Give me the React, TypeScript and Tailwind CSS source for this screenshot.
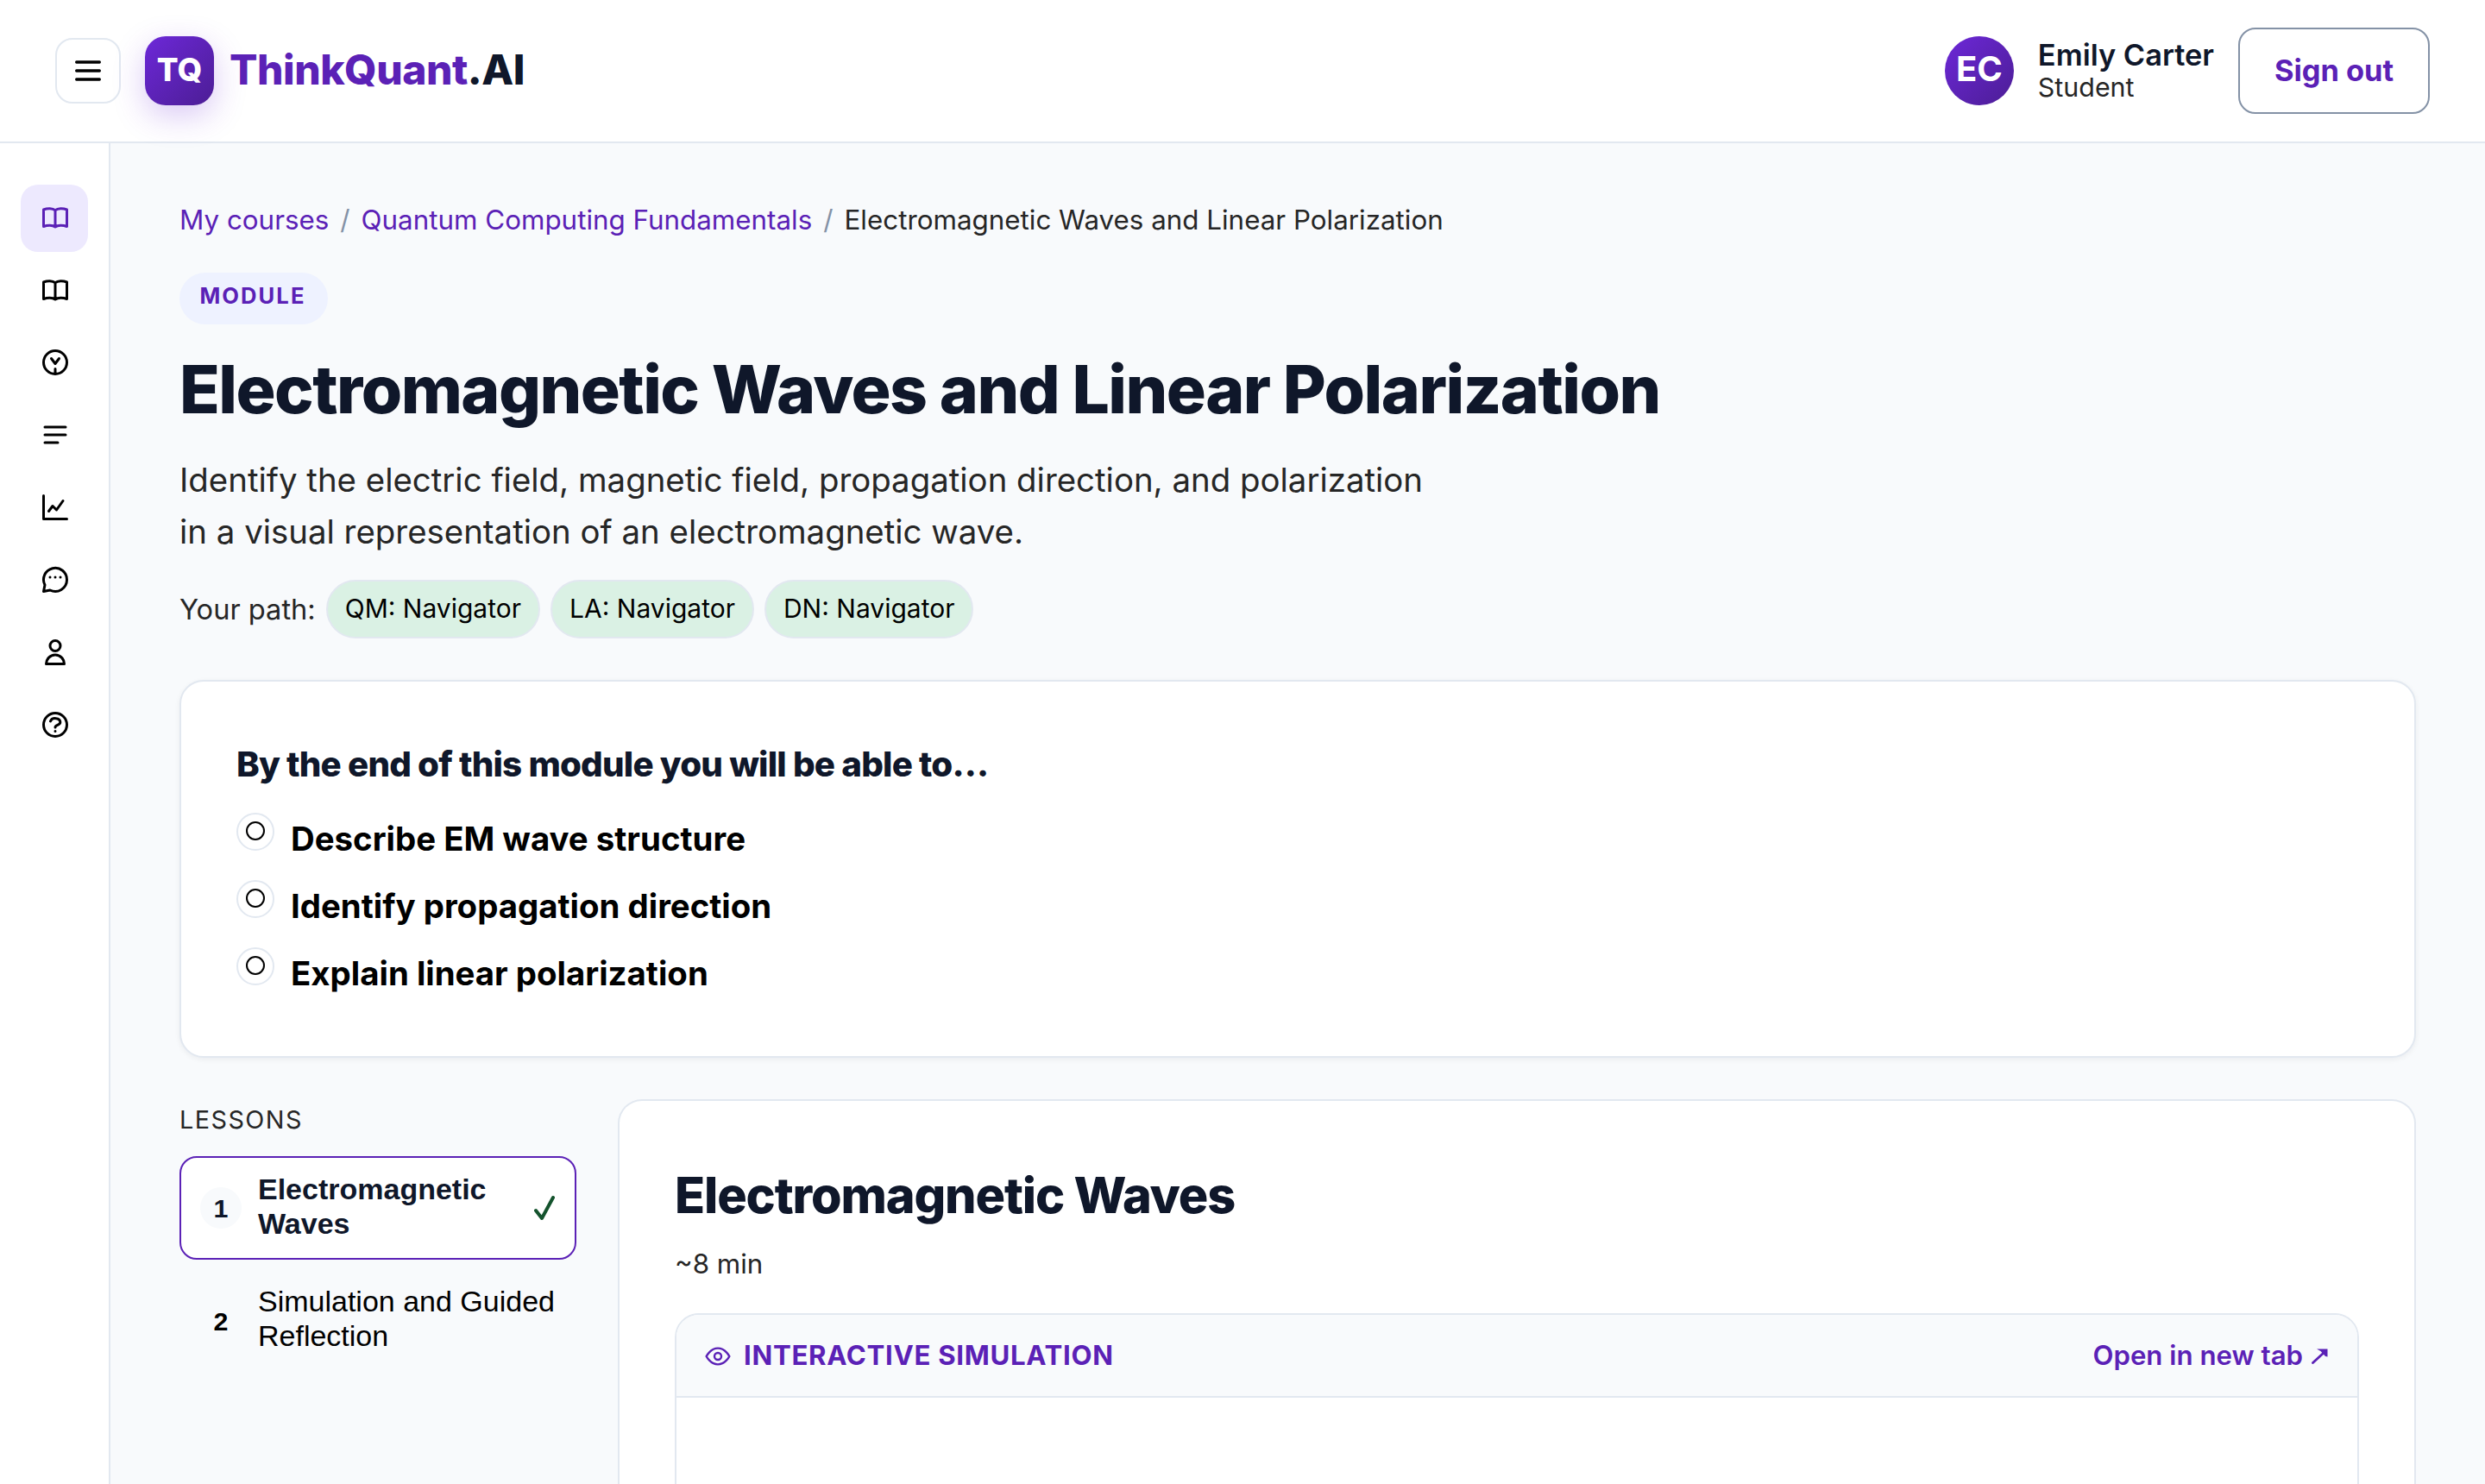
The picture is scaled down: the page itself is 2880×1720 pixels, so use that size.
import React from "react";

const book = (
  <path d="M12 6.5C10 4.8 6 4.8 3 6v13c3-1.2 7-1.2 9 .3 2-1.5 6-1.5 9-.3V6c-3-1.2-7-1.2-9 .5zM12 6.5v12.8" />
);

const navIcons = [
  book,
  book,
  <path d="M21 12a9 9 0 1 1-18 0 9 9 0 0 1 18 0zM9 9l3 4 3-4M12 17v4" />,
  <path d="M4 6h16M4 12h16M4 18h10" />,
  <path d="M3 3v18h18M7 15l3-4 3 3 5-7" />,
  <path d="M21 12a9 9 0 0 1-13 8l-5 1 1-5a9 9 0 1 1 17-4zM8 10h.01M12 10h.01M16 10h.01" />,
  <path d="M16 7a4 4 0 1 1-8 0 4 4 0 0 1 8 0zM5 21a7 7 0 0 1 14 0z" />,
  <path d="M21 12a9 9 0 1 1-18 0 9 9 0 0 1 18 0zM8.3 9.3C9.5 6 15.8 6.5 15.9 10c0 2.5-3.9 2-3.9 4M12 17h.01" />,
];

const paths = ["QM: Navigator", "LA: Navigator", "DN: Navigator"];

const outcomes = [
  "Describe EM wave structure",
  "Identify propagation direction",
  "Explain linear polarization",
];

function Icon({ className, children }: { className: string; children: React.ReactNode }) {
  return (
    <svg
      viewBox="0 0 24 24"
      fill="none"
      stroke="currentColor"
      strokeWidth="2"
      strokeLinecap="round"
      strokeLinejoin="round"
      className={className}
    >
      {children}
    </svg>
  );
}

function Header() {
  return (
    <header className="h-[166px] shrink-0 flex items-center justify-between px-16 bg-white border-b-2 border-[#e2e8f0]">
      <div className="flex items-center">
        <button aria-label="Menu" className="size-[76px] flex items-center justify-center rounded-[20px] border-2 border-[#e2e8f0] text-black">
          <Icon className="size-10"><path d="M4 6h16M4 12h16M4 18h16" /></Icon>
        </button>
        <div className="ml-7 size-20 pb-0.5 flex items-center justify-center rounded-3xl bg-linear-135 from-[#6d28d9] to-[#4c1d95] text-white text-[36.8px] font-extrabold shadow-[0_12px_36px_rgba(109,40,217,0.25)]">
          TQ
        </div>
        <span className="ml-[18px] pb-0.5 text-[48px] leading-none font-extrabold tracking-[-0.01em] text-[#5b21b6]">
          ThinkQuant<span className="text-[#0f172a]">.AI</span>
        </span>
      </div>
      <div className="flex items-center">
        <div className="size-20 pb-1 flex items-center justify-center rounded-full bg-linear-135 from-[#6d28d9] to-[#4c1d95] text-white text-[40px] font-bold">
          EC
        </div>
        <div className="ml-7 pb-px">
          <p className="text-[34.4px] leading-[39px] font-semibold text-[#0f172a]">Emily Carter</p>
          <p className="text-[30.4px] leading-[36px] text-[#262626]">Student</p>
        </div>
        <button className="ml-7 w-[222px] h-[100px] pb-px rounded-[20px] border-2 border-[#8492a6] text-[34.4px] font-bold text-[#5b21b6]">
          Sign out
        </button>
      </div>
    </header>
  );
}

function Sidebar() {
  return (
    <nav className="w-32 shrink-0 flex flex-col items-center gap-1.5 pt-12 bg-white border-r-2 border-[#e2e8f0]">
      {navIcons.map((icon, i) => (
        <a
          key={i}
          className={
            i === 0
              ? "size-[78px] flex items-center justify-center pl-0.5 pb-0.5 rounded-[20px] bg-[#ede9fe] text-[#5b21b6]"
              : "size-[78px] flex items-center justify-center pl-0.5 pb-0.5 text-black"
          }
        >
          <Icon className="size-9">{icon}</Icon>
        </a>
      ))}
    </nav>
  );
}

function ModuleIntro() {
  return (
    <section>
      <div className="pt-[69px] flex gap-[13px] text-[31.35px] leading-[40px] text-[#5b21b6]">
        <a>My courses</a>
        <span className="text-[#8492a6]">/</span>
        <a>Quantum Computing Fundamentals</a>
        <span className="text-[#8492a6]">/</span>
        <span className="text-[#262626]">Electromagnetic Waves and Linear Polarization</span>
      </div>
      <div className="mt-[41px] w-[172px] h-[60px] pl-[23.4px] pb-1.5 flex items-center rounded-full bg-[#eef2ff] text-[25.6px] font-bold tracking-[0.08em] text-[#5b21b6]">
        MODULE
      </div>
      <h1 className="mt-[30px] text-[76.8px] leading-[92px] font-extrabold tracking-[-0.02em] text-[#0f172a]">
        Electromagnetic Waves and Linear Polarization
      </h1>
      <p className="mt-[28px] w-[1500px] text-[38.4px] leading-[60px] text-[#262626]">
        Identify the electric field, magnetic field, propagation direction, and polarization
        <br />
        in a visual representation of an electromagnetic wave.
      </p>
      <div className="mt-[26px] flex items-center gap-3">
        <span className="text-[32.6px] text-[#262626]">Your path:</span>
        {paths.map((path) => (
          <span key={path} className="h-[68px] px-5 pb-0.5 flex items-center rounded-full border-2 border-[#e2e8f0] bg-[#daf1e4] text-[30px] text-black">
            {path}
          </span>
        ))}
      </div>
    </section>
  );
}

function Outcomes() {
  return (
    <section className="mt-12 h-[438px] px-16 pt-[70px] rounded-[28px] border-2 border-[#e2e8f0] bg-white shadow-[0_2px_6px_rgba(15,23,42,0.06)]">
      <h2 className="text-[40.3px] leading-[52px] font-extrabold tracking-[-0.02em] text-[#0f172a]">
        By the end of this module you will be able to…
      </h2>
      <ul className="mt-[26px] flex flex-col gap-[18px]">
        {outcomes.map((outcome) => (
          <li key={outcome} className="h-[60px] flex gap-[19px]">
            <span className="mt-1 size-11 flex justify-center rounded-full border-2 border-[#e2e8f0]">
              <span className="mt-2 size-[22px] rounded-full border-2 border-black" />
            </span>
            <span className="pt-1 text-[38.4px] leading-[60px] font-bold text-black">{outcome}</span>
          </li>
        ))}
      </ul>
    </section>
  );
}

function Lessons() {
  return (
    <aside className="w-[460px] shrink-0">
      <p className="pt-1 text-[28.8px] leading-[40px] tracking-[0.05em] text-[#262626]">LESSONS</p>
      <div className="mt-[22px] flex flex-col gap-2.5 font-['Liberation_Sans',Arial,sans-serif] text-[34px] leading-[40px]">
        <a className="h-[120px] px-[22px] flex items-center rounded-[20px] border-2 border-[#5b21b6] bg-white font-bold text-[#0f172a]">
          <span className="size-12 shrink-0 flex items-center justify-center rounded-full bg-[#f8fafc] text-[30.4px]">1</span>
          <span className="ml-[19px] w-[290px] pb-1">Electromagnetic Waves</span>
          <svg viewBox="0 0 24 28" fill="none" stroke="#14532d" strokeWidth="4" strokeLinecap="round" strokeLinejoin="round" className="ml-auto mr-px w-6 h-7">
            <path d="M2 17l7 9L22 2" />
          </svg>
        </a>
        <a className="h-[120px] px-6 flex items-center text-black">
          <span className="size-12 shrink-0 pt-0.5 flex items-center justify-center text-[30.4px] font-bold">2</span>
          <span className="ml-[19px] pb-1 whitespace-nowrap">
            Simulation and Guided
            <br />
            Reflection
          </span>
        </a>
      </div>
    </aside>
  );
}

function LessonCard() {
  return (
    <article className="flex-1 px-16 pt-[69px] rounded-t-[28px] border-2 border-b-0 border-[#e2e8f0] bg-white">
      <h2 className="text-[57.6px] leading-[80px] font-extrabold tracking-[-0.02em] text-[#0f172a]">Electromagnetic Waves</h2>
      <p className="mt-5 text-[31.3px] leading-[40px] text-[#262626]">~8 min</p>
      <div className="mt-[37px] h-[300px] rounded-t-[28px] border-2 border-[#e2e8f0] overflow-hidden">
        <div className="h-24 pl-8 pr-[34px] flex items-center justify-between border-b-2 border-[#e2e8f0] bg-[#f8fafc] text-[#5b21b6]">
          <span className="flex items-center text-[31.2px] font-bold tracking-[0.022em]">
            <svg viewBox="0 0 24 24" fill="none" stroke="currentColor" strokeWidth="1.8" className="mt-0.5 mr-3.5 size-8">
              <path d="M2 12s3.5-7 10-7 10 7 10 7-3.5 7-10 7-10-7-10-7z" />
              <circle cx="12" cy="12" r="3" />
            </svg>
            INTERACTIVE SIMULATION
          </span>
          <span className="flex items-center text-[31.2px] font-semibold">
            Open in new tab
            <svg viewBox="0 0 19 18" className="ml-2.5 mt-0.5 w-[19px] h-[18px]">
              <path d="M1.5 16.5L14 5" stroke="currentColor" strokeWidth="2.8" strokeLinecap="round" />
              <path d="M6 .5h12.500v9L16 9l-5.500-6z" fill="currentColor" />
            </svg>
          </span>
        </div>
      </div>
    </article>
  );
}

export default function App() {
  return (
    <div className="w-[2880px] h-[1720px] flex flex-col overflow-hidden bg-[#f8fafc] font-['Inter',sans-serif]">
      <Header />
      <div className="flex-1 min-h-0 flex">
        <Sidebar />
        <main className="flex-1 min-w-0 px-20">
          <ModuleIntro />
          <Outcomes />
          <div className="mt-12 flex gap-12">
            <Lessons />
            <LessonCard />
          </div>
        </main>
      </div>
    </div>
  );
}
